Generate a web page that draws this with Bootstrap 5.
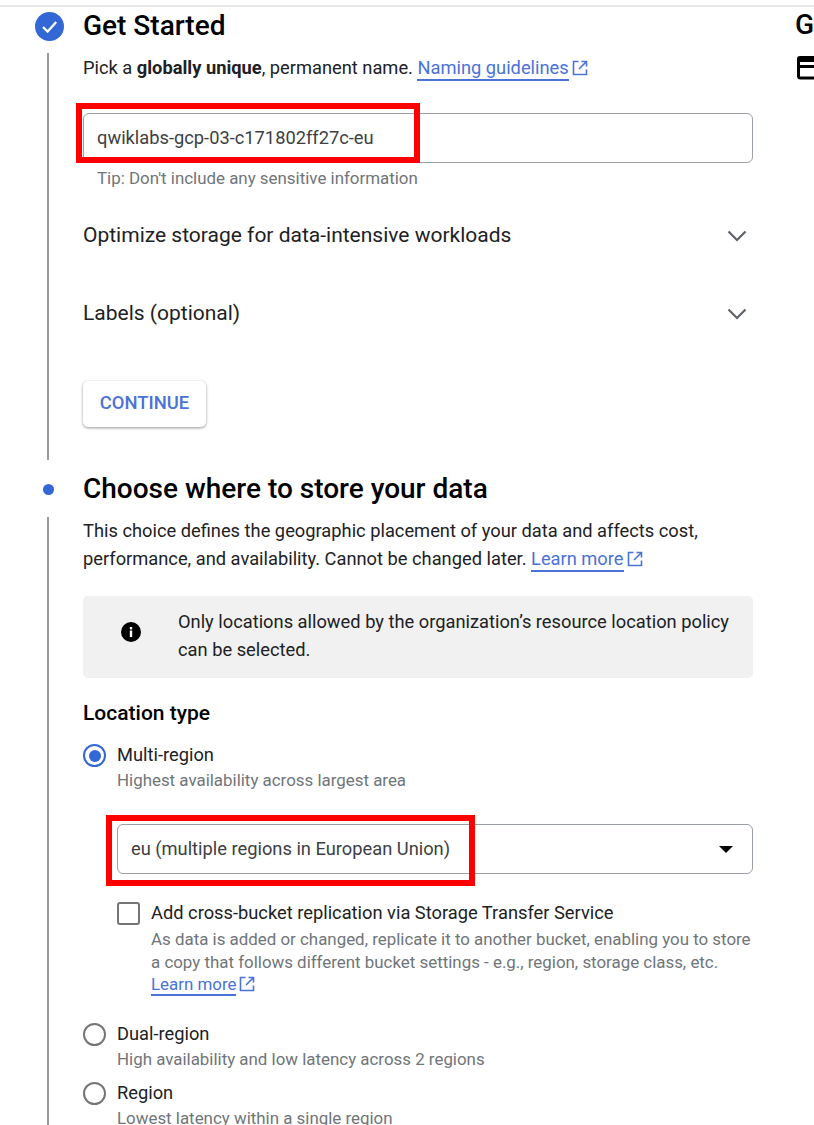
<!DOCTYPE html>
<html lang="en">
<head>
  <meta charset="UTF-8">
  <meta name="viewport" content="width=device-width, initial-scale=1.0">
  <title>Create a bucket</title>
  <link href="https://cdn.jsdelivr.net/npm/bootstrap@5.3.0/dist/css/bootstrap.min.css" rel="stylesheet">
  <script src="https://cdn.jsdelivr.net/npm/bootstrap@5.3.0/dist/js/bootstrap.bundle.min.js"></script>
  <style>
    html, body { height: 1125px; overflow: hidden; }
    body { font-family: Roboto, "Liberation Sans", sans-serif; color: #202124; background: #fff; font-size: 18.3px; }
    .top-rule { height: 2px; margin-top: 5px; background: #e8e8e8; }
    .page-wrap { height: 1118px; overflow: hidden; }
    .main-col { width: 795px; flex: none; }
    .side-col { width: 19px; flex: none; overflow: hidden; white-space: nowrap; padding-top: 2px; }
    .side-title { font-size: 28px; font-weight: 500; color: #000; line-height: 32px; }
    .side-icon { display: block; margin-top: 15px; margin-left: 0; width: 24px; height: 24px; }
    .step-head { display: flex; align-items: center; }
    .step-mark { width: 83px; flex: none; padding-left: 35px; display: flex; }
    .step-title { font-size: 28px; font-weight: 500; color: #000; line-height: 30px; margin: 0; }
    .step-dot { width: 11px; height: 11px; border-radius: 50%; background: #3367d6; margin-left: 8px; }
    .step-body { margin-left: 47px; border-left: 2px solid #9a9a9a; padding-left: 34px; width: 706px; }
    .field-box { position: relative; border: 1px solid #9aa0a6; border-radius: 6px; height: 50px; display: flex; align-items: center; color: #3c4043; }
    .hint { color: #70757a; font-size: 16.9px; }
    .doc-link { color: #4a72d8; text-decoration: none; border-bottom: 2px solid #4a72d8; line-height: 22px; display: inline-block; }
    .ext-icon { width: 16px; height: 16px; vertical-align: -2px; margin-left: 3px; }
    .expander { display: flex; justify-content: space-between; align-items: center; font-size: 21px; height: 30px; color: #202124; padding-right: 4px; }
    .continue-btn { font-size: 18.4px; font-weight: 500; color: #4a72d8; background: #fff; border: 0; border-radius: 5px; width: 123px; height: 46px; box-shadow: 0 1px 3px rgba(60,64,67,.55); padding: 0 0 2px; }
    .info-box { background: #f1f1f1; border-radius: 5px; height: 82px; display: flex; align-items: center; line-height: 28px; padding-right: 20px; }
    .info-mark { width: 95px; flex: none; display: flex; justify-content: center; padding-bottom: 10px; }
    .info-text { padding-bottom: 2px; }
    .sub-head { font-size: 21px; font-weight: 500; color: #000; line-height: 24px; }
    .choice { display: flex; }
    .radio-mark { width: 23px; height: 23px; border-radius: 50%; border: 2.5px solid #757575; flex: none; margin-right: 11px; margin-top: 1px; }
    .radio-mark.on { border-color: #3367d6; padding: 3.5px; }
    .radio-mark.on::after { content: ""; display: block; width: 100%; height: 100%; border-radius: 50%; background: #3367d6; }
    .choice-label { line-height: 24px; color: #202124; }
    .choice-sub { line-height: 26px; }
    .check-mark { width: 23px; height: 23px; border: 2.5px solid #757575; border-radius: 3px; flex: none; margin-right: 11px; margin-top: 1px; }
    .red-frame { position: absolute; border: 6px solid #f00; pointer-events: none; }
    .red-name { left: -8px; top: -11px; width: 344px; height: 60px; }
    .red-region { left: -12px; top: -10px; width: 369px; height: 71px; }
    .caret-down { width: 0; height: 0; border-left: 7.5px solid transparent; border-right: 7.5px solid transparent; border-top: 7.5px solid #000; }
  </style>
</head>
<body>

<div class="top-rule"></div>

<div class="page-wrap d-flex">
  <div class="main-col">

    <!-- Step 1 -->
    <div class="step-head" style="padding-top:4px">
      <div class="step-mark">
        <svg width="29" height="29" viewBox="0 0 29 29"><circle cx="14.5" cy="14.5" r="14.5" fill="#3367d6"/><path d="M8 15l4.6 4.6L21.2 10" fill="none" stroke="#fff" stroke-width="2.2"/></svg>
      </div>
      <h2 class="step-title">Get Started</h2>
    </div>

    <div class="step-body" style="margin-top:12px;height:407px;padding-top:3px">
      <div style="line-height:24px">Pick a <b class="fw-bold">globally unique</b>, permanent name. <a class="doc-link" href="#">Naming guidelines</a><svg class="ext-icon" viewBox="0 0 16 16"><path d="M6.500 1.500H1.500v13h13V9.500M9.500 1.500h5v5M14.500 1.500L7 9" fill="none" stroke="#4a72d8" stroke-width="1.600"/></svg></div>

      <div class="field-box" style="margin-top:32px;padding-left:13px">
        <span>qwiklabs-gcp-03-c171802ff27c-eu</span>
        <div class="red-frame red-name"></div>
      </div>
      <div class="hint" style="margin-top:4px;padding-left:14px;line-height:22px">Tip: Don't include any sensitive information</div>

      <div class="expander" style="margin-top:32px">
        <span>Optimize storage for data-intensive workloads</span>
        <svg width="24" height="24" viewBox="0 0 24 24"><path d="M3.500 7.500L12 16l8.500-8.500" fill="none" stroke="#5f6368" stroke-width="2.200"/></svg>
      </div>
      <div class="expander" style="margin-top:48px">
        <span>Labels (optional)</span>
        <svg width="24" height="24" viewBox="0 0 24 24"><path d="M3.500 7.500L12 16l8.500-8.500" fill="none" stroke="#5f6368" stroke-width="2.200"/></svg>
      </div>

      <button class="btn continue-btn" style="margin-top:52px" type="button">CONTINUE</button>
    </div>

    <!-- Step 2 -->
    <div class="step-head" style="margin-top:14px">
      <div class="step-mark"><div class="step-dot"></div></div>
      <h2 class="step-title">Choose where to store your data</h2>
    </div>

    <div class="step-body" style="margin-top:14px;height:620px">
      <div style="line-height:28px;margin-top:-1px">This choice defines the geographic placement of your data and affects cost, performance, and availability. Cannot be changed later. <a class="doc-link" href="#">Learn more</a><svg class="ext-icon" viewBox="0 0 16 16"><path d="M6.500 1.500H1.500v13h13V9.500M9.500 1.500h5v5M14.500 1.500L7 9" fill="none" stroke="#4a72d8" stroke-width="1.600"/></svg></div>

      <div class="info-box" style="margin-top:23px">
        <div class="info-mark">
          <svg width="20" height="20" viewBox="0 0 20 20"><circle cx="10" cy="10" r="10" fill="#000"/><rect x="8.800" y="8.500" width="2.400" height="6.500" fill="#fff"/><rect x="8.800" y="5" width="2.400" height="2.400" fill="#fff"/></svg>
        </div>
        <div class="info-text">Only locations allowed by the organization’s resource location policy can be selected.</div>
      </div>

      <div class="sub-head" style="margin-top:23px">Location type</div>

      <div class="choice" style="margin-top:18px">
        <div class="radio-mark on"></div>
        <div>
          <div class="choice-label">Multi-region</div>
          <div class="hint choice-sub">Highest availability across largest area</div>
        </div>
      </div>

      <div class="field-box justify-content-between" style="margin:31px 0 0 34px;padding:0 19px 0 13px">
        <span>eu (multiple regions in European Union)</span>
        <div class="caret-down"></div>
        <div class="red-frame red-region"></div>
      </div>

      <div class="choice" style="margin:27px 0 0 34px">
        <div class="check-mark"></div>
        <div>
          <div class="choice-label">Add cross-bucket replication via Storage Transfer Service</div>
          <div class="hint" style="line-height:22.5px;margin-top:3px">As data is added or changed, replicate it to another bucket, enabling you to store a copy that follows different bucket settings - e.g., region, storage class, etc.<br>
            <a class="doc-link" href="#" style="line-height:20px">Learn more</a><svg class="ext-icon" viewBox="0 0 16 16"><path d="M6.500 1.500H1.500v13h13V9.500M9.500 1.500h5v5M14.500 1.500L7 9" fill="none" stroke="#4a72d8" stroke-width="1.600"/></svg>
          </div>
        </div>
      </div>

      <div class="choice" style="margin-top:26px">
        <div class="radio-mark"></div>
        <div>
          <div class="choice-label">Dual-region</div>
          <div class="hint choice-sub">High availability and low latency across 2 regions</div>
        </div>
      </div>
      <div class="choice" style="margin-top:9px">
        <div class="radio-mark"></div>
        <div>
          <div class="choice-label">Region</div>
          <div class="hint choice-sub">Lowest latency within a single region</div>
        </div>
      </div>
    </div>
  </div>

  <!-- Right side panel, cut off by the window -->
  <div class="side-col">
    <div class="side-title">G</div>
    <svg class="side-icon" viewBox="0 0 24 24"><path d="M2 3a3 3 0 0 1 3-3h19v6H2z" fill="#000"/><path d="M3.500 4v16a2 2 0 0 0 2 2h18.500M3.500 10.500h20.500" fill="none" stroke="#000" stroke-width="3"/></svg>
  </div>
</div>

</body>
</html>
